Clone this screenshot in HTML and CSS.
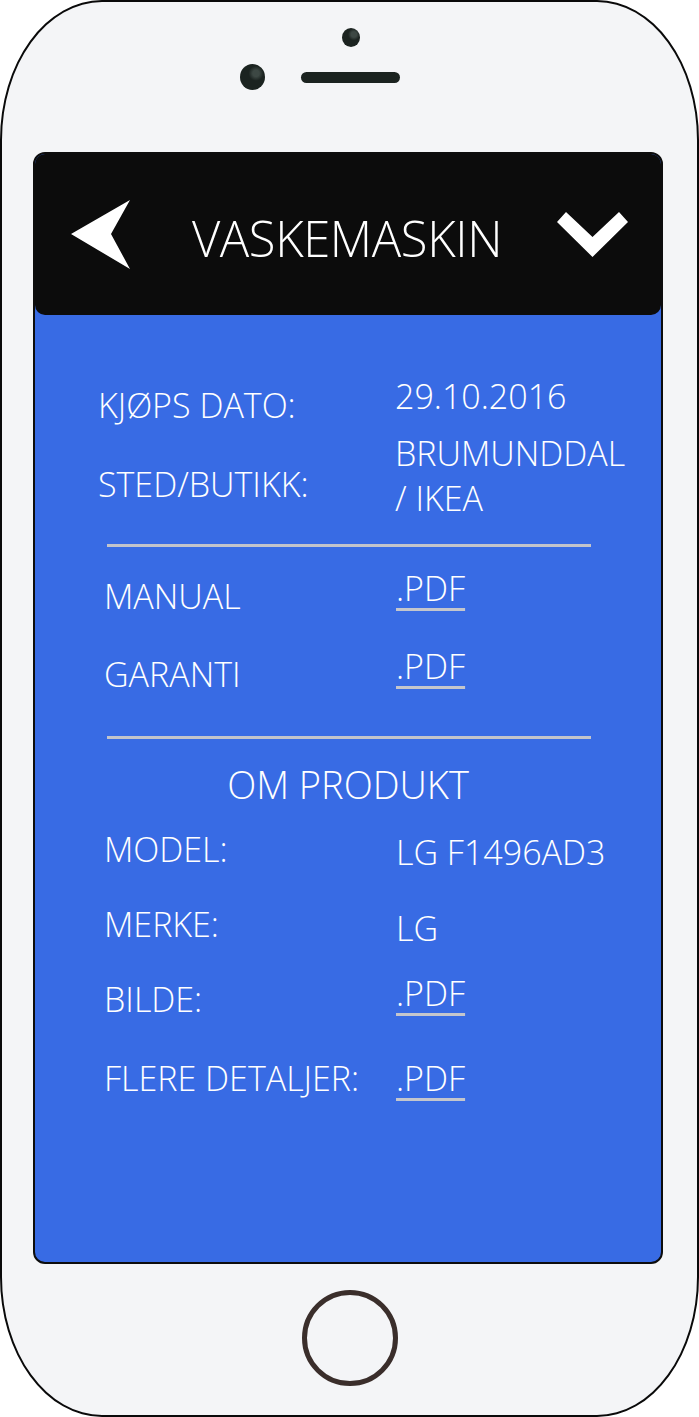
FILE: index.html
```html
<!DOCTYPE html>
<html lang="no">
<head>
<meta charset="utf-8">
<title>Vaskemaskin</title>
<link rel="stylesheet" href="styles.css">
</head>
<body>
<div class="phone">
  <div class="top">
    <span class="dot"></span>
    <div class="sensor-row">
      <span class="cam"></span>
      <span class="speaker"></span>
      <span class="spacer"></span>
    </div>
  </div>

  <div class="screen">
    <header class="bar">
      <svg class="back" width="60" height="70" viewBox="0 0 60 70" aria-hidden="true">
        <polygon points="0,34 59,0 40,34 59,69" fill="#fff"/>
      </svg>
      <h1 class="title">VASKEMASKIN</h1>
      <svg class="chev" width="71" height="46" viewBox="0 0 71 46" aria-hidden="true">
        <polygon points="0,10 9,0 35.5,25 62,0 71,10 35.5,45" fill="#fff"/>
      </svg>
    </header>

    <main class="content">
      <section class="group first">
        <div class="row">
          <span class="label drop-9">KJØPS DATO:</span>
          <span class="value">29.10.2016</span>
        </div>
        <div class="row gap-3">
          <span class="label drop-31">STED/BUTIKK:</span>
          <span class="value">BRUMUNDDAL<br>/ IKEA</span>
        </div>
      </section>

      <hr class="divider gap-23">

      <section class="group">
        <div class="row gap-19">
          <span class="label drop-8">MANUAL</span>
          <span class="value"><span class="link">.PDF</span></span>
        </div>
        <div class="row gap-25">
          <span class="label drop-8">GARANTI</span>
          <span class="value"><span class="link">.PDF</span></span>
        </div>
      </section>

      <hr class="divider gap-39">

      <h2 class="heading">OM PRODUKT</h2>

      <section class="group">
        <div class="row gap-20">
          <span class="label">MODEL:</span>
          <span class="value drop-3">LG F1496AD3</span>
        </div>
        <div class="row gap-27">
          <span class="label">MERKE:</span>
          <span class="value drop-4">LG</span>
        </div>
        <div class="row gap-20">
          <span class="label drop-6">BILDE:</span>
          <span class="value"><span class="link">.PDF</span></span>
        </div>
        <div class="row gap-34">
          <span class="label">FLERE DETALJER:</span>
          <span class="value"><span class="link">.PDF</span></span>
        </div>
      </section>
    </main>
  </div>

  <div class="bottom">
    <span class="home"></span>
  </div>
</div>
</body>
</html>
```

FILE: styles.css
```css
* {
  box-sizing: border-box;
}

html,
body {
  margin: 0;
  padding: 0;
}

body {
  width: 699px;
  height: 1417px;
  background: #ffffff;
  font-family: "Open Sans", "Liberation Sans", sans-serif;
}

/* ---------- phone body ---------- */
.phone {
  width: 699px;
  height: 1417px;
  border: 2px solid #0a0a0a;
  border-radius: 102px / 140px;
  background: #f4f5f7;
  display: flex;
  flex-direction: column;
}

.top {
  height: 150px;
  flex: none;
  display: flex;
  flex-direction: column;
  align-items: center;
  padding-top: 26px;
}

.dot {
  width: 18px;
  height: 19px;
  margin-left: 3px;
  border-radius: 50%;
  background: radial-gradient(circle at 66% 34%, #3d4844 0 16%, #1b2320 34%);
}

.sensor-row {
  display: flex;
  align-items: center;
  gap: 36px;
  margin-top: 17px;
  margin-left: 2px;
}

.cam {
  width: 25px;
  height: 26px;
  border-radius: 50%;
  background: radial-gradient(circle at 64% 36%, #3d4844 0 14%, #1b2320 32%);
}

.speaker {
  width: 99px;
  height: 11px;
  border-radius: 6px;
  background: #1b2320;
}

.spacer {
  width: 25px;
  height: 1px;
}

/* ---------- screen ---------- */
.screen {
  flex: none;
  margin-left: 31px;
  width: 630px;
  height: 1112px;
  border: 2px solid #0d0d0d;
  border-radius: 12px;
  background: #386be4;
  overflow: hidden;
  display: flex;
  flex-direction: column;
}

.bar {
  flex: none;
  height: 161px;
  background: #0c0c0c;
  border-radius: 0 0 10px 10px;
  display: flex;
  align-items: center;
  padding: 0 33px 0 36px;
}

.back,
.chev {
  flex: none;
  display: block;
}

.title {
  flex: 1;
  margin: 0;
  padding: 6px 0 0 6px;
  text-align: center;
  color: #ffffff;
  font-size: 49px;
  font-weight: 300;
  line-height: 50px;
  letter-spacing: -0.4px;
}

.content {
  padding-top: 59px;
  color: #ffffff;
}

.group {
  display: flex;
  flex-direction: column;
}

.row {
  display: flex;
  align-items: flex-start;
  padding-left: 69px;
  font-size: 34px;
  font-weight: 300;
  line-height: 45px;
}

.first .row {
  padding-left: 63px;
}

.label {
  flex: none;
  width: 292px;
  white-space: nowrap;
}

.first .label {
  width: 297px;
}

.value {
  white-space: nowrap;
}

.link {
  text-decoration: underline;
  text-decoration-color: #c4c6cc;
  text-decoration-thickness: 3px;
  text-underline-offset: 7px;
}

.divider {
  margin: 0 0 0 72px;
  width: 484px;
  height: 3px;
  border: none;
  background: #c2c4cb;
}

.heading {
  margin: 23px 0 0;
  text-align: center;
  font-size: 38px;
  font-weight: 300;
  line-height: 45px;
  color: #ffffff;
}

/* vertical offsets (as drawn in the mockup) */
.gap-3 { margin-top: 3px; }
.gap-19 { margin-top: 19px; }
.gap-20 { margin-top: 20px; }
.gap-23 { margin-top: 23px; }
.gap-25 { margin-top: 25px; }
.gap-27 { margin-top: 27px; }
.gap-34 { margin-top: 34px; }
.gap-39 { margin-top: 39px; }

.drop-3 { margin-top: 3px; }
.drop-4 { margin-top: 4px; }
.drop-6 { margin-top: 6px; }
.drop-8 { margin-top: 8px; }
.drop-9 { margin-top: 9px; }
.drop-31 { margin-top: 31px; }

/* ---------- home button ---------- */
.bottom {
  flex: 1;
  display: flex;
  justify-content: center;
  padding-top: 26px;
}

.home {
  width: 96px;
  height: 96px;
  border: 5px solid #3a2e2b;
  border-radius: 50%;
}
```
